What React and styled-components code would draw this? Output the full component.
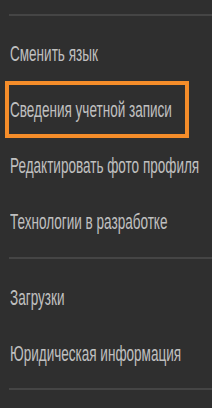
import React from 'react';
import styled, { createGlobalStyle } from 'styled-components';

const GlobalStyle = createGlobalStyle`
  html, body {
    margin: 0;
    padding: 0;
    background: #2f2f2f;
  }
`;

const Panel = styled.nav`
  width: 212px;
  height: 408px;
  padding-top: 14px;
  box-sizing: border-box;
  background: #2f2f2f;
  display: flex;
  flex-direction: column;
  overflow: hidden;
`;

const Divider = styled.hr`
  margin: ${(p) => p.$top || 0}px 0 ${(p) => p.$bottom || 0}px 9px;
  border: 0;
  height: 2px;
  background: #454545;
`;

const Item = styled.div`
  position: relative;
  height: 56px;
  display: flex;
  align-items: center;
  padding-left: 10px;
  white-space: nowrap;

  ${(p) => p.$selected && `
    &::after {
      content: '';
      position: absolute;
      left: 5px;
      top: -1px;
      width: 184px;
      height: 57px;
      box-sizing: border-box;
      border: 4px solid #f58d2a;
    }
  `}
`;

const Label = styled.span`
  display: inline-block;
  font-family: "Liberation Sans", Arial, sans-serif;
  font-size: 22px;
  line-height: 1;
  color: #c0c0c0;
  transform: scaleX(0.615);
  transform-origin: left center;
`;

const groups = [
  ['Сменить язык', 'Сведения учетной записи', 'Редактировать фото профиля', 'Технологии в разработке'],
  ['Загрузки', 'Юридическая информация'],
];

export default function App() {
  return (
    <>
      <GlobalStyle />
      <Panel>
        <Divider $bottom={10} />
        {groups[0].map((t) => (
          <Item key={t} $selected={t === 'Сведения учетной записи'}>
            <Label>{t}</Label>
          </Item>
        ))}
        <Divider $top={7} $bottom={11} />
        {groups[1].map((t) => (
          <Item key={t}>
            <Label>{t}</Label>
          </Item>
        ))}
        <Divider $top={6} />
      </Panel>
    </>
  );
}
